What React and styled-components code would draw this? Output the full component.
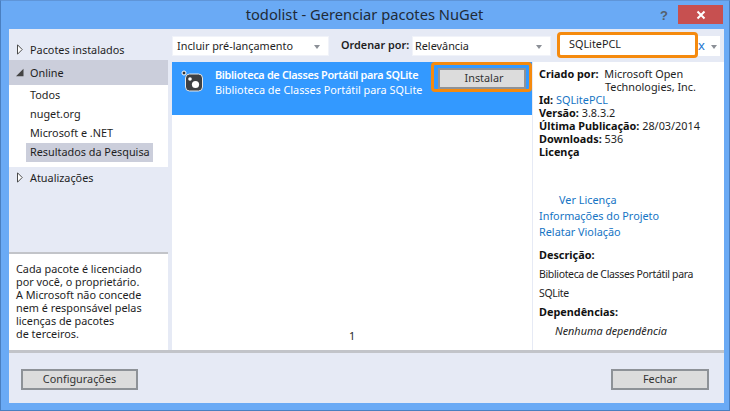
import styled, { createGlobalStyle } from "styled-components";

const GlobalStyle = createGlobalStyle`
  html, body {
    margin: 0;
    padding: 0;
    background: #6aaaf5;
  }
  * {
    box-sizing: border-box;
  }
`;

const Win = styled.div`
  width: 730px;
  height: 411px;
  border: 1px solid #4a7fc0;
  border-top-color: #5f95d8;
  background: #6aaaf5;
  display: flex;
  flex-direction: column;
  padding: 0 5px 7px 8px;
  font-family: "Noto Sans", "Open Sans", sans-serif;
  font-size: 10.85px;
  color: #1e1e1e;
  overflow: hidden;
`;

const TitleBar = styled.div`
  height: 28px;
  flex: none;
  display: flex;
  align-items: flex-start;
`;

const Title = styled.div`
  flex: 1;
  text-align: center;
  font-size: 14.7px;
  line-height: 27px;
  color: #1f2b38;
  padding-left: 60px;
`;

const Help = styled.div`
  width: 12px;
  margin-top: 5px;
  margin-right: 6px;
  font-family: "Liberation Sans", sans-serif;
  font-size: 13px;
  font-weight: 700;
  line-height: 19px;
  color: #55606c;
`;

const Close = styled.div`
  width: 45px;
  height: 19px;
  margin-top: 4px;
  margin-right: 1px;
  background: #c75050;
  display: flex;
  align-items: center;
  justify-content: center;
`;

const Content = styled.div`
  flex: 1;
  display: flex;
  flex-direction: column;
  background: #e6eaf5;
  min-height: 0;
`;

const Main = styled.div`
  height: 321px;
  flex: none;
  display: flex;
`;

const Sidebar = styled.div`
  width: 159px;
  flex: none;
  margin-right: 4px;
  display: flex;
  flex-direction: column;
`;

const TreeRow = styled.div`
  height: ${(props) => props.h}px;
  display: flex;
  align-items: center;
  background: ${(props) => (props.active ? "#cbcedb" : "transparent")};
  padding-left: ${(props) => (props.active ? 6 : 8)}px;
  padding-top: ${(props) => props.top || 0}px;
  padding-bottom: 1px;
  gap: ${(props) => (props.active ? 6 : 7)}px;
  flex: none;
`;

const SubList = styled.div`
  background: #fff;
  height: 82px;
  padding: 1px 0 0 17px;
  flex: none;
`;

const SubItem = styled.div`
  height: 19px;
  line-height: 18px;
  padding-left: 4px;
  width: 127px;
  background: ${(props) => (props.selected ? "#cbcedb" : "transparent")};
  white-space: nowrap;
`;

const Notice = styled.div`
  margin-top: auto;
  height: 98px;
  background: #fff;
  border-top: 2px solid #c2c4c9;
  padding: 8px 0 0 7px;
  line-height: 13px;
  white-space: nowrap;
`;

const Center = styled.div`
  flex: 1;
  display: flex;
  flex-direction: column;
  min-width: 0;
`;

const Toolbar = styled.div`
  height: 33px;
  flex: none;
  display: flex;
  align-items: flex-start;
`;

const Select = styled.div`
  width: ${(props) => props.w}px;
  height: 20px;
  margin-top: 7px;
  background: #fff;
  border: 1px solid #f1f3f9;
  display: flex;
  align-items: center;
  justify-content: space-between;
  padding: 0 8px 2px ${(props) => props.pad}px;
  white-space: nowrap;
`;

const Caret = styled.span`
  width: 0;
  height: 0;
  border-left: 3.5px solid transparent;
  border-right: 3.5px solid transparent;
  border-top: 4px solid #8b8f96;
  margin-top: 4px;
`;

const SortLabel = styled.div`
  width: 83px;
  margin-top: 6px;
  padding-left: 12px;
  line-height: 20px;
  font-weight: 600;
  white-space: nowrap;
`;

const Search = styled.div`
  width: 141px;
  height: 26px;
  margin: 3px 0 0 6px;
  background: #fff;
  border: 3px solid #f58a0e;
  border-radius: 4px;
  padding-left: 9px;
  line-height: 18px;
  white-space: nowrap;
`;

const ClearBox = styled.div`
  width: 22px;
  height: 20px;
  margin-top: 7px;
  background: #fff;
  display: flex;
  align-items: center;
  justify-content: space-between;
  padding: 0 3px 2px 0;
  color: #1f78d1;
  font-size: 13px;
`;

const ResultsRow = styled.div`
  flex: 1;
  display: flex;
  min-height: 0;
`;

const ResultList = styled.div`
  width: 360px;
  flex: none;
  background: #fff;
  display: flex;
  flex-direction: column;
`;

const Package = styled.div`
  height: 53px;
  flex: none;
  background: #3399ff;
  color: #fff;
  display: flex;
  align-items: flex-start;
`;

const PackageIcon = styled.svg`
  width: 24px;
  height: 24px;
  margin: 7px 0 0 7px;
  flex: none;
`;

const PackageText = styled.div`
  width: 216px;
  margin-left: 12px;
  padding-top: 5px;
  line-height: 15px;
  white-space: nowrap;
`;

const PackageName = styled.div`
  font-weight: 600;
  letter-spacing: -0.3px;
`;

const InstallFrame = styled.div`
  width: 101px;
  height: 30px;
  flex: none;
  border: 3px solid #f58a0e;
  border-radius: 4px;
  padding: 3px 0 0 4px;
`;

const Button = styled.div`
  width: ${(props) => props.w}px;
  height: 21px;
  background: #dcdcdc;
  border: 2px solid #8e9297;
  color: #333;
  text-align: center;
  line-height: 16px;
`;

const InstallLabel = styled.span`
  padding-left: 4px;
`;

const Pager = styled.div`
  margin-top: auto;
  height: 21px;
  text-align: center;
  line-height: 14px;
`;

const Details = styled.div`
  width: 191px;
  flex: none;
  margin-left: 1px;
  background: #fff;
  padding: 5px 0 0 6px;
  line-height: 13px;
  white-space: nowrap;
`;

const Field = styled.div`
  padding-left: ${(props) => props.indent || 0}px;
  margin-top: ${(props) => props.gap || 0}px;
`;

const Key = styled.b`
  font-weight: 700;
  color: #111;
  margin-right: ${(props) => props.$after || 0}px;
`;

const Link = styled.span`
  color: #1574c4;
`;

const Narrow = styled.div`
  margin-top: ${(props) => props.gap || 0}px;
  letter-spacing: -0.35px;
  font-size: 10.5px;
`;

const Italic = styled.div`
  margin-top: 6px;
  padding-left: 16px;
  font-style: italic;
`;

const Divider = styled.div`
  height: 3px;
  flex: none;
  background: #c2c4c9;
`;

const Footer = styled.div`
  flex: 1;
  display: flex;
  justify-content: space-between;
  align-items: flex-start;
  padding: 16px 15px 0 12px;
`;

function Expand() {
  return (
    <svg width="6" height="11" viewBox="0 0 6 11">
      <path d="M.5.8 5.2 5.5.5 10.2Z" fill="#fff" stroke="#4a4a4a" />
    </svg>
  );
}

function Collapse() {
  return (
    <svg width="9" height="9" viewBox="0 0 9 9">
      <path d="M8.5.8V8.2H1Z" fill="#444" />
    </svg>
  );
}

export default function App() {
  return (
    <>
      <GlobalStyle />
      <Win>
        <TitleBar>
          <Title>todolist - Gerenciar pacotes NuGet</Title>
          <Help>?</Help>
          <Close>
            <svg width="10" height="10" viewBox="0 0 10 10">
              <path d="M1.5 1.5 8.5 8.5M8.5 1.5 1.5 8.5" stroke="#fff" strokeWidth="2" />
            </svg>
          </Close>
        </TitleBar>
        <Content>
          <Main>
            <Sidebar>
              <TreeRow h={31} top={10}>
                <Expand />
                Pacotes instalados
              </TreeRow>
              <TreeRow h={25} active>
                <Collapse />
                Online
              </TreeRow>
              <SubList>
                <SubItem>Todos</SubItem>
                <SubItem>nuget.org</SubItem>
                <SubItem>Microsoft e .NET</SubItem>
                <SubItem selected>Resultados da Pesquisa</SubItem>
              </SubList>
              <TreeRow h={22}>
                <Expand />
                Atualizações
              </TreeRow>
              <Notice>
                Cada pacote é licenciado
                <br />
                por você, o proprietário.
                <br />A Microsoft não concede
                <br />
                nem é responsável pelas
                <br />
                licenças de pacotes
                <br />
                de terceiros.
              </Notice>
            </Sidebar>
            <Center>
              <Toolbar>
                <Select w={157} pad={4}>
                  Incluir pré-lançamento
                  <Caret />
                </Select>
                <SortLabel>Ordenar por:</SortLabel>
                <Select w={139} pad={2}>
                  Relevância
                  <Caret />
                </Select>
                <Search>SQLitePCL</Search>
                <ClearBox>
                  x
                  <Caret />
                </ClearBox>
              </Toolbar>
              <ResultsRow>
                <ResultList>
                  <Package>
                    <PackageIcon viewBox="0 0 24 24">
                      <circle cx="5" cy="4" r="2" fill="#333" stroke="#fff" />
                      <rect x="6.5" y="5" width="17" height="17" rx="4" fill="#3d4043" stroke="#e8e8e8" />
                      <circle cx="11" cy="10" r="1.8" fill="#fff" />
                      <circle cx="16.5" cy="15.5" r="3.6" fill="#fff" />
                    </PackageIcon>
                    <PackageText>
                      <PackageName>Biblioteca de Classes Portátil para SQLite</PackageName>
                      Biblioteca de Classes Portátil para SQLite
                    </PackageText>
                    <InstallFrame>
                      <Button w={88}>
                        <InstallLabel>Instalar</InstallLabel>
                      </Button>
                    </InstallFrame>
                  </Package>
                  <Pager>1</Pager>
                </ResultList>
                <Details>
                  <Field>
                    <Key $after={3}>Criado por:</Key> Microsoft Open
                  </Field>
                  <Field indent={66}>Technologies, Inc.</Field>
                  <Field>
                    <Key>Id:</Key> <Link>SQLitePCL</Link>
                  </Field>
                  <Field>
                    <Key>Versão:</Key> 3.8.3.2
                  </Field>
                  <Field>
                    <Key>Última Publicação:</Key> 28/03/2014
                  </Field>
                  <Field>
                    <Key>Downloads:</Key> 536
                  </Field>
                  <Field>
                    <Key>Licença</Key>
                  </Field>
                  <Field indent={20} gap={35}>
                    <Link>Ver Licença</Link>
                  </Field>
                  <Field gap={3}>
                    <Link>Informações do Projeto</Link>
                  </Field>
                  <Field gap={3}>
                    <Link>Relatar Violação</Link>
                  </Field>
                  <Field gap={10}>
                    <Key>Descrição:</Key>
                  </Field>
                  <Narrow gap={7}>Biblioteca de Classes Portátil para</Narrow>
                  <Narrow gap={6}>SQLite</Narrow>
                  <Field gap={5}>
                    <Key>Dependências:</Key>
                  </Field>
                  <Italic>Nenhuma dependência</Italic>
                </Details>
              </ResultsRow>
            </Center>
          </Main>
          <Divider />
          <Footer>
            <Button w={117}>Configurações</Button>
            <Button w={98}>Fechar</Button>
          </Footer>
        </Content>
      </Win>
    </>
  );
}
